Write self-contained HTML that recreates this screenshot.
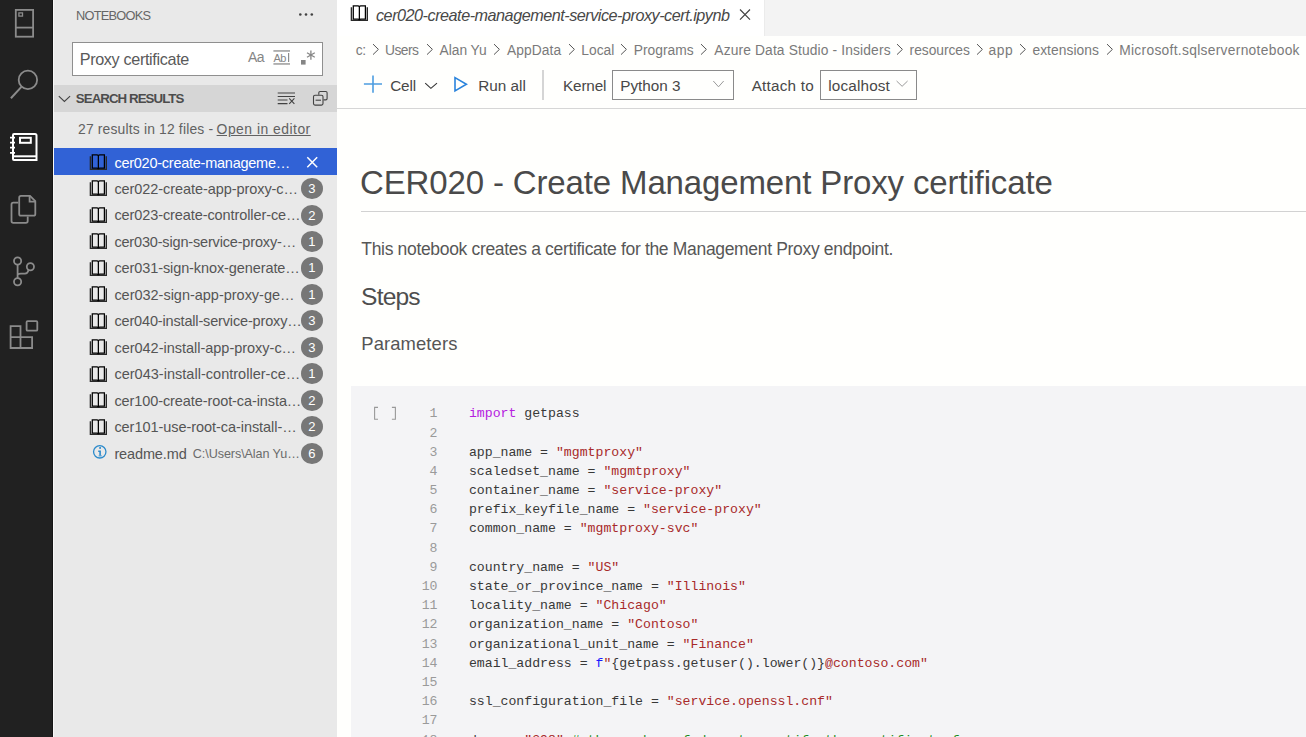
<!DOCTYPE html>
<html><head><meta charset="utf-8">
<style>
html,body{margin:0;padding:0;width:1306px;height:737px;overflow:hidden;background:#fff;}
body{position:relative;font-family:"Liberation Sans", sans-serif;}
.abs{position:absolute;}
.t{position:absolute;white-space:pre;line-height:1;}
svg{position:absolute;overflow:visible;}
.cl{position:absolute;left:468.9px;white-space:pre;font:13.2px/1 "Liberation Mono", monospace;color:#383838;}
.ln{position:absolute;left:400px;width:37.5px;text-align:right;white-space:pre;font:13.2px/1 "Liberation Mono", monospace;color:#9a9a9a;}
.k{color:#b520e0}.s{color:#a82a2a}.b{color:#1a1aff}.c{color:#1a8a1a}
.badge{position:absolute;left:301px;width:21.8px;height:21.2px;border-radius:50%;background:#777;color:#fff;font:13px/21.2px "Liberation Sans", sans-serif;text-align:center;}
</style></head>
<body>
<!-- activity bar -->
<div class="abs" style="left:0;top:0;width:52px;height:737px;background:#212121"></div>
<div class="abs" style="left:52px;top:0;width:1px;height:737px;background:#161616"></div>
<!-- sidebar -->
<div class="abs" style="left:53px;top:0;width:284px;height:737px;background:#e9e9e9"></div>
<div class="abs" style="left:53px;top:0;width:1px;height:737px;background:#f7f7f7"></div>
<!-- search box -->
<div class="abs" style="left:72px;top:42px;width:249px;height:32px;background:#fff;border:1px solid #8f8f8f"></div>
<!-- search results header -->
<div class="abs" style="left:54px;top:85px;width:283px;height:27px;background:#d6d6d6"></div>
<!-- selected row -->
<div class="abs" style="left:54px;top:148px;width:283px;height:26.5px;background:#3162d6"></div>

<!-- editor -->
<div class="abs" style="left:337px;top:36px;width:969px;height:701px;background:#fffffd"></div>
<div class="abs" style="left:337px;top:0;width:969px;height:36px;background:#f3f3f3"></div>
<div class="abs" style="left:764px;top:0;width:1px;height:36px;background:#ebebeb"></div>
<div class="abs" style="left:337px;top:0;width:427px;height:36px;background:#fff"></div>
<div class="abs" style="left:337px;top:108px;width:969px;height:1px;background:#d6d6d6"></div>
<div class="abs" style="left:361px;top:211px;width:945px;height:1px;background:#d2d2d2"></div>
<div class="abs" style="left:351px;top:386px;width:955px;height:351px;background:#f4f4f6"></div>
<div class="abs" style="left:542px;top:70px;width:2px;height:30px;background:#d5d5d5"></div>
<div class="abs" style="left:612px;top:70px;width:120px;height:28px;border:1px solid #8a8a8a"></div>
<div class="abs" style="left:819.8px;top:70px;width:95.7px;height:28px;border:1px solid #8a8a8a"></div>


<!-- ===== activity bar icons ===== -->
<svg style="left:0;top:0" width="53" height="360" viewBox="0 0 53 360">
 <g fill="none" stroke="#8b8b8b" stroke-width="1.8">
  <rect x="15.8" y="9.9" width="17.3" height="26.8"/>
  <line x1="15.8" y1="27.6" x2="33.1" y2="27.6"/>
  <rect x="18.9" y="12.9" width="3.6" height="3.2" stroke-width="1.3"/>
  <circle cx="27.9" cy="79.9" r="9.2"/>
  <line x1="21.4" y1="86.9" x2="10.9" y2="98.3" stroke-width="2"/>
  <!-- explorer -->
  <path d="M18.3,202.6 H13.3 Q11.5,202.6 11.5,204.4 V221 Q11.5,222.8 13.3,222.8 H25.9 Q27.7,222.8 27.7,221 V216.6"/>
  <path d="M21,195.9 H30 L35.3,201.2 V213.9 Q35.3,215.7 33.5,215.7 H21 Q19.2,215.7 19.2,213.9 V197.7 Q19.2,195.9 21,195.9 Z"/>
  <path d="M29.6,195.9 V201.6 H35.3"/>
  <!-- git -->
  <circle cx="17.6" cy="261" r="3.6"/>
  <circle cx="17.6" cy="281.7" r="3.6"/>
  <circle cx="30.4" cy="266.8" r="3.6"/>
  <line x1="17.6" y1="264.6" x2="17.6" y2="278.1"/>
  <path d="M17.6,274.3 Q18.5,273.6 21,273.6 H25 Q27.6,273.6 28.6,270"/>
  <!-- extensions -->
  <path d="M10.6,326.2 H20.5 V348 H10.6 Z M10.6,337.1 H32.1 V348 H20.5"/>
  <rect x="26.6" y="321.1" width="10.7" height="9.6" rx="1"/>
 </g>
 <g fill="none" stroke="#ffffff" stroke-width="2">
  <path d="M14,134 H35 Q36.5,134 36.5,135.5 V160 H14 Q13,160 13,159 V135 Q13,134 14,134 Z"/>
  <line x1="13" y1="156.3" x2="36.5" y2="156.3"/>
  <rect x="20" y="137.8" width="10.8" height="5" stroke-width="2"/>
  <path d="M10,137.6 H15 M10,142.6 H15 M10,147.6 H15 M10,152.8 H15" stroke-width="1.8"/>
 </g>
</svg>

<!-- ===== sidebar icons ===== -->
<svg style="left:296px;top:11px" width="20" height="8"><g fill="#424242"><circle cx="4.3" cy="3.5" r="1.3"/><circle cx="10" cy="3.5" r="1.3"/><circle cx="15.8" cy="3.5" r="1.3"/></g></svg>
<div class="t" style="left:248px;top:49.8px;font-size:14px;color:#858585;letter-spacing:-0.6px">Aa</div>
<svg style="left:272px;top:49px" width="20" height="17"><g fill="#8c8c8c"><rect x="1.4" y="1.3" width="16.6" height="1.3"/><rect x="1.4" y="14.3" width="16.6" height="1.3"/><rect x="16" y="4" width="1.2" height="9"/></g></svg>
<div class="t" style="left:273.6px;top:52.6px;font-size:11px;color:#858585;letter-spacing:-0.7px">Ab</div>
<svg style="left:300px;top:49px" width="18" height="17"><g fill="#858585"><rect x="1" y="11" width="4.6" height="4.6"/></g><g stroke="#858585" stroke-width="1.3"><line x1="10.9" y1="1.4" x2="10.9" y2="10.7"/><line x1="7" y1="3.8" x2="14.8" y2="8.2"/><line x1="7" y1="8.2" x2="14.8" y2="3.8"/></g></svg>

<svg style="left:54px;top:88px" width="20" height="20"><path d="M4.8,8.1 L10.4,13.4 L16.1,8.1" fill="none" stroke="#424242" stroke-width="1.1"/></svg>
<svg style="left:274px;top:88px" width="60" height="22"><g fill="none" stroke="#424242" stroke-width="1.1">
 <path d="M3.7,5 H21 M3.7,8.5 H21 M3.7,12 H13.5 M3.7,15.6 H13.5"/>
 <path d="M15.2,10.4 L20.4,15.8 M20.4,10.4 L15.2,15.8"/>
 <path d="M44.8,6.8 V4.8 Q44.8,3.5 46.1,3.5 H51.8 Q53.1,3.5 53.1,4.8 V10.6 Q53.1,11.9 51.8,11.9 H49.5"/>
 <rect x="39.5" y="7.2" width="9.5" height="9.9" rx="1.5"/>
 <path d="M41.6,12.2 H47"/>
</g></svg>

<!-- selected row x -->
<svg style="left:305px;top:155px" width="15" height="15"><path d="M2.3,2.3 L12.2,12.2 M12.2,2.3 L2.3,12.2" stroke="#fff" stroke-width="1.5"/></svg>
<svg style='left:89.30px;top:154.00px' width='18.0' height='17.0' viewBox='0 0 18 17'><path d='M1.4,2.2 V15.4 H17.3 V2.2' fill='none' stroke='#2a2a2a' stroke-width='1.4'/><path d='M3.3,0.9 H8.1 Q9.36,0.9 9.36,2 Q9.36,0.9 10.6,0.9 H15.4 V14.1 H10.6 Q9.36,14.1 9.36,15.2 Q9.36,14.1 8.1,14.1 H3.3 Z M9.36,2 V14.6' fill='none' stroke='#000' stroke-width='1.25'/></svg>
<svg style='left:89.30px;top:180.45px' width='18.0' height='17.0' viewBox='0 0 18 17'><path d='M1.4,2.2 V15.4 H17.3 V2.2' fill='none' stroke='#2a2a2a' stroke-width='1.4'/><path d='M3.3,0.9 H8.1 Q9.36,0.9 9.36,2 Q9.36,0.9 10.6,0.9 H15.4 V14.1 H10.6 Q9.36,14.1 9.36,15.2 Q9.36,14.1 8.1,14.1 H3.3 Z M9.36,2 V14.6' fill='none' stroke='#000' stroke-width='1.25'/></svg>
<svg style='left:89.30px;top:206.90px' width='18.0' height='17.0' viewBox='0 0 18 17'><path d='M1.4,2.2 V15.4 H17.3 V2.2' fill='none' stroke='#2a2a2a' stroke-width='1.4'/><path d='M3.3,0.9 H8.1 Q9.36,0.9 9.36,2 Q9.36,0.9 10.6,0.9 H15.4 V14.1 H10.6 Q9.36,14.1 9.36,15.2 Q9.36,14.1 8.1,14.1 H3.3 Z M9.36,2 V14.6' fill='none' stroke='#000' stroke-width='1.25'/></svg>
<svg style='left:89.30px;top:233.35px' width='18.0' height='17.0' viewBox='0 0 18 17'><path d='M1.4,2.2 V15.4 H17.3 V2.2' fill='none' stroke='#2a2a2a' stroke-width='1.4'/><path d='M3.3,0.9 H8.1 Q9.36,0.9 9.36,2 Q9.36,0.9 10.6,0.9 H15.4 V14.1 H10.6 Q9.36,14.1 9.36,15.2 Q9.36,14.1 8.1,14.1 H3.3 Z M9.36,2 V14.6' fill='none' stroke='#000' stroke-width='1.25'/></svg>
<svg style='left:89.30px;top:259.80px' width='18.0' height='17.0' viewBox='0 0 18 17'><path d='M1.4,2.2 V15.4 H17.3 V2.2' fill='none' stroke='#2a2a2a' stroke-width='1.4'/><path d='M3.3,0.9 H8.1 Q9.36,0.9 9.36,2 Q9.36,0.9 10.6,0.9 H15.4 V14.1 H10.6 Q9.36,14.1 9.36,15.2 Q9.36,14.1 8.1,14.1 H3.3 Z M9.36,2 V14.6' fill='none' stroke='#000' stroke-width='1.25'/></svg>
<svg style='left:89.30px;top:286.25px' width='18.0' height='17.0' viewBox='0 0 18 17'><path d='M1.4,2.2 V15.4 H17.3 V2.2' fill='none' stroke='#2a2a2a' stroke-width='1.4'/><path d='M3.3,0.9 H8.1 Q9.36,0.9 9.36,2 Q9.36,0.9 10.6,0.9 H15.4 V14.1 H10.6 Q9.36,14.1 9.36,15.2 Q9.36,14.1 8.1,14.1 H3.3 Z M9.36,2 V14.6' fill='none' stroke='#000' stroke-width='1.25'/></svg>
<svg style='left:89.30px;top:312.70px' width='18.0' height='17.0' viewBox='0 0 18 17'><path d='M1.4,2.2 V15.4 H17.3 V2.2' fill='none' stroke='#2a2a2a' stroke-width='1.4'/><path d='M3.3,0.9 H8.1 Q9.36,0.9 9.36,2 Q9.36,0.9 10.6,0.9 H15.4 V14.1 H10.6 Q9.36,14.1 9.36,15.2 Q9.36,14.1 8.1,14.1 H3.3 Z M9.36,2 V14.6' fill='none' stroke='#000' stroke-width='1.25'/></svg>
<svg style='left:89.30px;top:339.15px' width='18.0' height='17.0' viewBox='0 0 18 17'><path d='M1.4,2.2 V15.4 H17.3 V2.2' fill='none' stroke='#2a2a2a' stroke-width='1.4'/><path d='M3.3,0.9 H8.1 Q9.36,0.9 9.36,2 Q9.36,0.9 10.6,0.9 H15.4 V14.1 H10.6 Q9.36,14.1 9.36,15.2 Q9.36,14.1 8.1,14.1 H3.3 Z M9.36,2 V14.6' fill='none' stroke='#000' stroke-width='1.25'/></svg>
<svg style='left:89.30px;top:365.60px' width='18.0' height='17.0' viewBox='0 0 18 17'><path d='M1.4,2.2 V15.4 H17.3 V2.2' fill='none' stroke='#2a2a2a' stroke-width='1.4'/><path d='M3.3,0.9 H8.1 Q9.36,0.9 9.36,2 Q9.36,0.9 10.6,0.9 H15.4 V14.1 H10.6 Q9.36,14.1 9.36,15.2 Q9.36,14.1 8.1,14.1 H3.3 Z M9.36,2 V14.6' fill='none' stroke='#000' stroke-width='1.25'/></svg>
<svg style='left:89.30px;top:392.05px' width='18.0' height='17.0' viewBox='0 0 18 17'><path d='M1.4,2.2 V15.4 H17.3 V2.2' fill='none' stroke='#2a2a2a' stroke-width='1.4'/><path d='M3.3,0.9 H8.1 Q9.36,0.9 9.36,2 Q9.36,0.9 10.6,0.9 H15.4 V14.1 H10.6 Q9.36,14.1 9.36,15.2 Q9.36,14.1 8.1,14.1 H3.3 Z M9.36,2 V14.6' fill='none' stroke='#000' stroke-width='1.25'/></svg>
<svg style='left:89.30px;top:418.50px' width='18.0' height='17.0' viewBox='0 0 18 17'><path d='M1.4,2.2 V15.4 H17.3 V2.2' fill='none' stroke='#2a2a2a' stroke-width='1.4'/><path d='M3.3,0.9 H8.1 Q9.36,0.9 9.36,2 Q9.36,0.9 10.6,0.9 H15.4 V14.1 H10.6 Q9.36,14.1 9.36,15.2 Q9.36,14.1 8.1,14.1 H3.3 Z M9.36,2 V14.6' fill='none' stroke='#000' stroke-width='1.25'/></svg>
<svg style='left:349.60px;top:4.60px' width='18.0' height='17.0' viewBox='0 0 18 17'><path d='M1.4,2.2 V15.4 H17.3 V2.2' fill='none' stroke='#2a2a2a' stroke-width='1.4'/><path d='M3.3,0.9 H8.1 Q9.36,0.9 9.36,2 Q9.36,0.9 10.6,0.9 H15.4 V14.1 H10.6 Q9.36,14.1 9.36,15.2 Q9.36,14.1 8.1,14.1 H3.3 Z M9.36,2 V14.6' fill='none' stroke='#000' stroke-width='1.25'/></svg>
<div class='badge' style='top:178.05px'>3</div>
<div class='badge' style='top:204.50px'>2</div>
<div class='badge' style='top:230.95px'>1</div>
<div class='badge' style='top:257.40px'>1</div>
<div class='badge' style='top:283.85px'>1</div>
<div class='badge' style='top:310.30px'>3</div>
<div class='badge' style='top:336.75px'>3</div>
<div class='badge' style='top:363.20px'>1</div>
<div class='badge' style='top:389.65px'>2</div>
<div class='badge' style='top:416.10px'>2</div>
<div class='badge' style='top:442.55px'>6</div>
<svg style="left:92px;top:444px" width="16" height="16"><circle cx="7.75" cy="7.8" r="6.2" fill="none" stroke="#2b8acb" stroke-width="1.3"/><rect x="7.2" y="3.1" width="1.8" height="1.7" fill="#2b8acb"/><path d="M6.2,7.3 H8.1 V11.6" fill="none" stroke="#2b8acb" stroke-width="1.6"/><path d="M6.6,11.9 H9.8" stroke="#2b8acb" stroke-width="0.9"/></svg>

<!-- ===== editor icons ===== -->
<svg style="left:737px;top:7px" width="16" height="16"><path d="M3,2.5 L13,12.6 M13,2.5 L3,12.6" stroke="#424242" stroke-width="1.15"/></svg>
<svg style='left:372.3px;top:43px' width='8' height='13'><path d='M1,1.1 L6.4,6.4 L1,11.6' fill='none' stroke='#555' stroke-width='1'/></svg>
<svg style='left:425.5px;top:43px' width='8' height='13'><path d='M1,1.1 L6.4,6.4 L1,11.6' fill='none' stroke='#555' stroke-width='1'/></svg>
<svg style='left:493.0px;top:43px' width='8' height='13'><path d='M1,1.1 L6.4,6.4 L1,11.6' fill='none' stroke='#555' stroke-width='1'/></svg>
<svg style='left:568.0px;top:43px' width='8' height='13'><path d='M1,1.1 L6.4,6.4 L1,11.6' fill='none' stroke='#555' stroke-width='1'/></svg>
<svg style='left:619.7px;top:43px' width='8' height='13'><path d='M1,1.1 L6.4,6.4 L1,11.6' fill='none' stroke='#555' stroke-width='1'/></svg>
<svg style='left:700.0px;top:43px' width='8' height='13'><path d='M1,1.1 L6.4,6.4 L1,11.6' fill='none' stroke='#555' stroke-width='1'/></svg>
<svg style='left:895.6px;top:43px' width='8' height='13'><path d='M1,1.1 L6.4,6.4 L1,11.6' fill='none' stroke='#555' stroke-width='1'/></svg>
<svg style='left:976.3px;top:43px' width='8' height='13'><path d='M1,1.1 L6.4,6.4 L1,11.6' fill='none' stroke='#555' stroke-width='1'/></svg>
<svg style='left:1019.0px;top:43px' width='8' height='13'><path d='M1,1.1 L6.4,6.4 L1,11.6' fill='none' stroke='#555' stroke-width='1'/></svg>
<svg style='left:1105.9px;top:43px' width='8' height='13'><path d='M1,1.1 L6.4,6.4 L1,11.6' fill='none' stroke='#555' stroke-width='1'/></svg>
<svg style="left:360px;top:72px" width="120" height="24"><g fill="none">
 <path d="M3.9,12 H22 M13,3.4 V20.7" stroke="#4d9de0" stroke-width="1.6"/>
 <path d="M65.2,11.1 L70.9,16.3 L77,11.1" stroke="#333" stroke-width="1.1"/>
 <path d="M95,5.6 L106.4,12.2 L95,18.9 Z" stroke="#2a83dc" stroke-width="1.6" stroke-linejoin="miter"/>
</g></svg>
<svg style="left:710px;top:78px" width="16" height="12"><path d="M3.3,3 L8.5,8.8 L13.7,3" fill="none" stroke="#9a9a9a" stroke-width="1"/></svg>
<svg style="left:894px;top:78px" width="16" height="12"><path d="M2.6,3 L8.1,8.3 L13.6,3" fill="none" stroke="#9a9a9a" stroke-width="1"/></svg>

<div class='t' style="left:76.00px;top:10.00px;font-size:12.8px;color:#666666;letter-spacing:-0.750px;">NOTEBOOKS</div>
<div class='t' style="left:79.70px;top:51.00px;font-size:16.2px;color:#5a5a5a;letter-spacing:-0.344px;">Proxy certificate</div>
<div class='t' style="left:75.80px;top:92.00px;font-size:13.3px;color:#4c4c4c;font-weight:bold;letter-spacing:-0.946px;">SEARCH RESULTS</div>
<div class='t' style="left:78.00px;top:123.00px;font-size:13.9px;color:#626262;letter-spacing:0.165px;">27 results in 12 files -</div>
<div class='t' style="left:216.60px;top:123.00px;font-size:13.9px;color:#626262;letter-spacing:0.492px;text-decoration:underline;text-underline-offset:1px;">Open in editor</div>
<div class='t' style="left:114.40px;top:156.00px;font-size:14.5px;color:#ffffff;letter-spacing:-0.250px;">cer020-create-manageme…</div>
<div class='t' style="left:114.40px;top:182.00px;font-size:14.5px;color:#555555;letter-spacing:-0.068px;">cer022-create-app-proxy-c…</div>
<div class='t' style="left:114.40px;top:208.00px;font-size:14.5px;color:#555555;letter-spacing:-0.089px;">cer023-create-controller-ce…</div>
<div class='t' style="left:114.40px;top:235.00px;font-size:14.5px;color:#555555;letter-spacing:-0.169px;">cer030-sign-service-proxy-…</div>
<div class='t' style="left:114.40px;top:261.00px;font-size:14.5px;color:#555555;letter-spacing:-0.096px;">cer031-sign-knox-generate…</div>
<div class='t' style="left:114.40px;top:288.00px;font-size:14.5px;color:#555555;letter-spacing:-0.017px;">cer032-sign-app-proxy-ge…</div>
<div class='t' style="left:114.40px;top:314.00px;font-size:14.5px;color:#555555;letter-spacing:-0.157px;">cer040-install-service-proxy…</div>
<div class='t' style="left:114.40px;top:341.00px;font-size:14.5px;color:#555555;letter-spacing:-0.015px;">cer042-install-app-proxy-c…</div>
<div class='t' style="left:114.40px;top:367.00px;font-size:14.5px;color:#555555;letter-spacing:0.021px;">cer043-install-controller-ce…</div>
<div class='t' style="left:114.40px;top:394.00px;font-size:14.5px;color:#555555;letter-spacing:-0.089px;">cer100-create-root-ca-insta…</div>
<div class='t' style="left:114.40px;top:420.00px;font-size:14.5px;color:#555555;letter-spacing:-0.052px;">cer101-use-root-ca-install-…</div>
<div class='t' style="left:114.40px;top:447.00px;font-size:14.5px;color:#555555;letter-spacing:-0.125px;">readme.md</div>
<div class='t' style="left:192.80px;top:448.00px;font-size:12.6px;color:#6b6b6b;letter-spacing:-0.081px;">C:\Users\Alan Yu…</div>
<div class='t' style="left:376.00px;top:7.00px;font-size:16.2px;color:#484848;font-style:italic;letter-spacing:-0.479px;">cer020-create-management-service-proxy-cert.ipynb</div>
<div class='t' style="left:355.70px;top:44.00px;font-size:13.8px;color:#7a7a7a;letter-spacing:-0.400px;">c:</div>
<div class='t' style="left:385.00px;top:44.00px;font-size:13.8px;color:#7a7a7a;letter-spacing:-0.525px;">Users</div>
<div class='t' style="left:439.60px;top:44.00px;font-size:13.8px;color:#7a7a7a;letter-spacing:-0.050px;">Alan Yu</div>
<div class='t' style="left:507.00px;top:44.00px;font-size:13.8px;color:#7a7a7a;letter-spacing:0.083px;">AppData</div>
<div class='t' style="left:581.30px;top:44.00px;font-size:13.8px;color:#7a7a7a;letter-spacing:0.025px;">Local</div>
<div class='t' style="left:633.70px;top:44.00px;font-size:13.8px;color:#7a7a7a;letter-spacing:0.014px;">Programs</div>
<div class='t' style="left:714.30px;top:44.00px;font-size:13.8px;color:#7a7a7a;letter-spacing:0.137px;">Azure Data Studio - Insiders</div>
<div class='t' style="left:909.60px;top:44.00px;font-size:13.8px;color:#7a7a7a;letter-spacing:-0.038px;">resources</div>
<div class='t' style="left:988.60px;top:44.00px;font-size:13.8px;color:#7a7a7a;letter-spacing:0.550px;">app</div>
<div class='t' style="left:1032.40px;top:44.00px;font-size:13.8px;color:#7a7a7a;letter-spacing:0.067px;">extensions</div>
<div class='t' style="left:1119.20px;top:44.00px;font-size:13.8px;color:#7a7a7a;letter-spacing:0.300px;">Microsoft.sqlservernotebook</div>
<div class='t' style="left:390.20px;top:78.00px;font-size:15.3px;color:#484848;letter-spacing:-0.167px;">Cell</div>
<div class='t' style="left:478.20px;top:78.00px;font-size:15.3px;color:#484848;">Run all</div>
<div class='t' style="left:563.00px;top:78.00px;font-size:15.3px;color:#484848;letter-spacing:-0.160px;">Kernel</div>
<div class='t' style="left:620.20px;top:78.00px;font-size:15.3px;color:#484848;letter-spacing:-0.014px;">Python 3</div>
<div class='t' style="left:751.70px;top:78.00px;font-size:15.3px;color:#484848;letter-spacing:0.213px;">Attach to</div>
<div class='t' style="left:828.20px;top:78.00px;font-size:15.3px;color:#484848;letter-spacing:0.162px;">localhost</div>
<div class='t' style="left:360.00px;top:166.00px;font-size:33px;color:#4a4a4a;letter-spacing:-0.140px;">CER020 - Create Management Proxy certificate</div>
<div class='t' style="left:361.30px;top:241.00px;font-size:17.5px;color:#575757;letter-spacing:-0.326px;">This notebook creates a certificate for the Management Proxy endpoint.</div>
<div class='t' style="left:361.10px;top:285.00px;font-size:24.6px;color:#4e4e4e;letter-spacing:-0.850px;">Steps</div>
<div class='t' style="left:361.30px;top:335.00px;font-size:18.4px;color:#555555;letter-spacing:0.111px;">Parameters</div>
<div class='cl' style='top:407.35px'><span class="k">import</span> getpass</div>
<div class='ln' style='top:407.35px'>1</div>
<div class='cl' style='top:426.54px'></div>
<div class='ln' style='top:426.54px'>2</div>
<div class='cl' style='top:445.73px'>app_name = <span class="s">"mgmtproxy"</span></div>
<div class='ln' style='top:445.73px'>3</div>
<div class='cl' style='top:464.92px'>scaledset_name = <span class="s">"mgmtproxy"</span></div>
<div class='ln' style='top:464.92px'>4</div>
<div class='cl' style='top:484.11px'>container_name = <span class="s">"service-proxy"</span></div>
<div class='ln' style='top:484.11px'>5</div>
<div class='cl' style='top:503.30px'>prefix_keyfile_name = <span class="s">"service-proxy"</span></div>
<div class='ln' style='top:503.30px'>6</div>
<div class='cl' style='top:522.49px'>common_name = <span class="s">"mgmtproxy-svc"</span></div>
<div class='ln' style='top:522.49px'>7</div>
<div class='cl' style='top:541.68px'></div>
<div class='ln' style='top:541.68px'>8</div>
<div class='cl' style='top:560.87px'>country_name = <span class="s">"US"</span></div>
<div class='ln' style='top:560.87px'>9</div>
<div class='cl' style='top:580.06px'>state_or_province_name = <span class="s">"Illinois"</span></div>
<div class='ln' style='top:580.06px'>10</div>
<div class='cl' style='top:599.25px'>locality_name = <span class="s">"Chicago"</span></div>
<div class='ln' style='top:599.25px'>11</div>
<div class='cl' style='top:618.44px'>organization_name = <span class="s">"Contoso"</span></div>
<div class='ln' style='top:618.44px'>12</div>
<div class='cl' style='top:637.63px'>organizational_unit_name = <span class="s">"Finance"</span></div>
<div class='ln' style='top:637.63px'>13</div>
<div class='cl' style='top:656.82px'>email_address = <span class="b">f</span><span class="s">"</span>{getpass.getuser().lower()}<span class="s">@contoso.com"</span></div>
<div class='ln' style='top:656.82px'>14</div>
<div class='cl' style='top:676.01px'></div>
<div class='ln' style='top:676.01px'>15</div>
<div class='cl' style='top:695.20px'>ssl_configuration_file = <span class="s">"service.openssl.cnf"</span></div>
<div class='ln' style='top:695.20px'>16</div>
<div class='cl' style='top:714.39px'></div>
<div class='ln' style='top:714.39px'>17</div>
<div class='cl' style='top:733.58px'>days = <span class="s">"398"</span> <span class="c"># the number of days to certify the certificate for</span></div>
<div class='ln' style='top:733.58px'>18</div>
<svg style="left:372px;top:405px" width="26" height="17"><path d="M6,2.4 H2.6 V14.3 H6 M19.9,2.4 H23.4 V14.3 H19.9" fill="none" stroke="#999" stroke-width="1.1"/></svg>
</body></html>
